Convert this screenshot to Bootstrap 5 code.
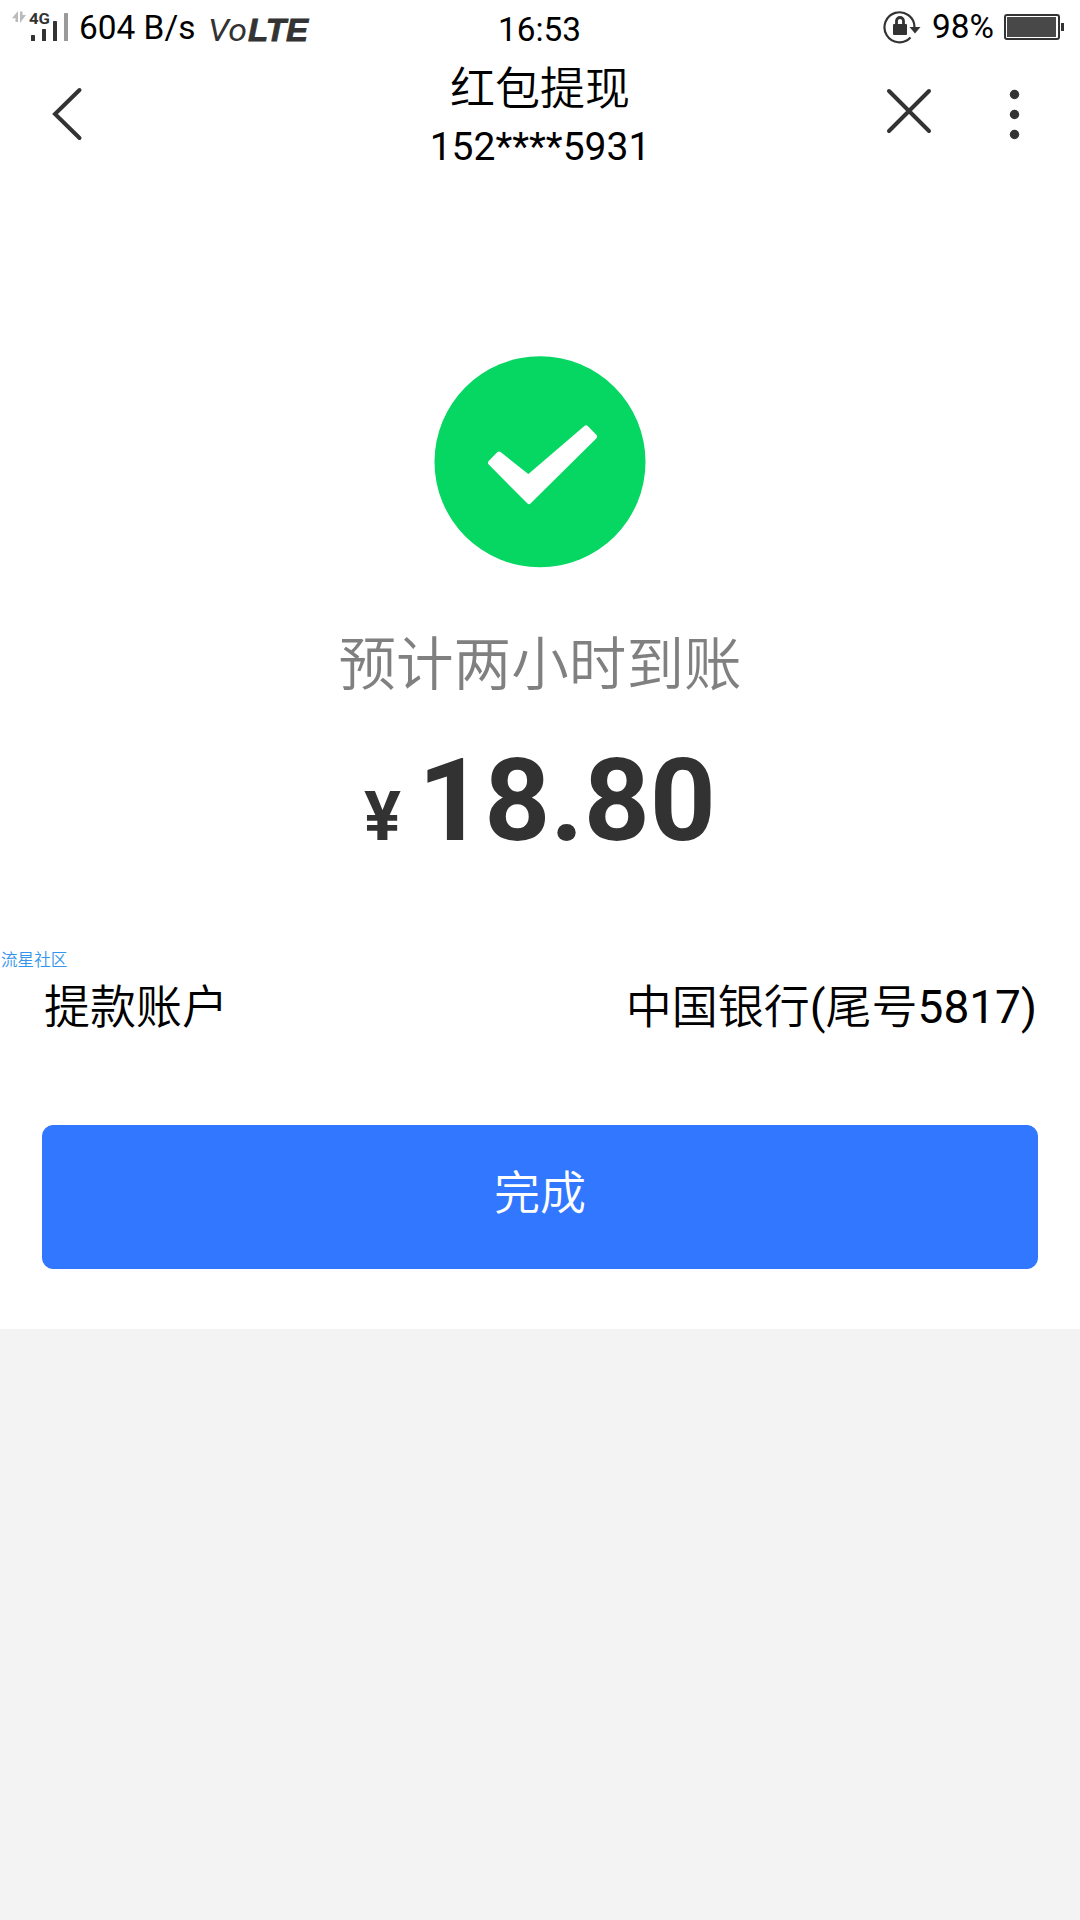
<!DOCTYPE html>
<html lang="zh-CN">
<head>
<meta charset="utf-8">
<meta name="viewport" content="width=device-width, initial-scale=1">
<title>红包提现</title>
<link href="https://cdn.jsdelivr.net/npm/bootstrap@5.3.0/dist/css/bootstrap.min.css" rel="stylesheet">
<style>
body{font-family:Roboto,"Noto Sans CJK SC",sans-serif;background:#f3f3f3;color:#000}
.screen-top{height:1329px;background:#fff}
.status-bar{height:56px;font-size:33.4px;line-height:56px;padding:0 16px 0 11px}
.status-side{width:440px}
.clock-text{padding:2px 0 0 4px}
.battery-text{margin:-1px 9px 0 11px}
.title-bar{height:116px;padding:0 40px}
.title-side{width:260px}
.title-main{font-size:45px;line-height:66px;padding-top:1px;font-weight:350}
.title-sub{font-size:39px;line-height:48px}
.icon-btn{line-height:0}
.result-icon{margin-top:184px}
.result-note{margin-top:58px;font-size:57.6px;line-height:80px;font-weight:350;color:#808080}
.amount{height:120px;margin-top:35px;line-height:120px;color:#323232}
.amount-num{font-size:115.2px}
.amount-cur{font-size:69px;margin-right:17px}
.site-tag{margin-top:87px;height:29px;padding-left:1px;font-size:16.6px;line-height:26px;font-weight:350;color:#3595ee}
.account-row{font-size:46px;line-height:60px;padding:0 43px 0 44px;font-weight:350}
.action-wrap{padding:88px 42px 0}
.btn-done{--bs-btn-bg:#3277ff;--bs-btn-border-color:#3277ff;--bs-btn-color:#fff;--bs-btn-border-radius:11px;--bs-btn-font-size:46px;--bs-btn-font-weight:350;height:144px;line-height:132px;padding:0 0 8px}
</style>
</head>
<body>
<main class="screen-top d-flex flex-column">
  <header>
    <div class="status-bar d-flex justify-content-between">
      <div class="status-side d-flex">
        <svg width="60" height="56" viewBox="11 0 60 56" fill="#333">
          <path fill="#bbb" d="M18 11V22H15.500V18.200H12ZM20 11.500H22.500V15H26L20 23Z"/>
          <text x="29" y="24" font-size="15" font-weight="700" textLength="21" lengthAdjust="spacingAndGlyphs">4G</text>
          <rect x="31" y="35" width="4" height="6" rx=".6"/><rect x="42" y="29" width="4" height="12" rx=".6"/><rect x="53" y="21" width="4" height="20" rx=".6"/>
          <rect x="64" y="13" width="4" height="28" rx=".6" fill="#999"/>
        </svg>
        <span class="ms-2">604 B/s</span>
        <svg class="ms-2" width="110" height="56" viewBox="203 0 110 56" fill="#333" font-style="italic">
          <text x="208" y="40.500" font-size="32" textLength="39" lengthAdjust="spacingAndGlyphs" font-family="Roboto">Vo</text>
          <text x="248" y="40.500" font-size="31.500" font-weight="700" stroke="#333" stroke-width=".8" textLength="60" lengthAdjust="spacingAndGlyphs" font-family="Liberation Sans">LTE</text>
        </svg>
      </div>
      <div class="clock-text">16:53</div>
      <div class="status-side d-flex justify-content-end">
        <svg width="38" height="56" viewBox="883 0 38 56">
          <path d="M910.500 37.500A15 15 0 1 1 914.500 27" fill="none" stroke="#333" stroke-width="2.200"/>
          <path d="M909.500 27H920.500L915 33.500Z" fill="#333"/>
          <rect x="893" y="24" width="14" height="11" rx="1" fill="#333"/>
          <path d="M896.500 25V21a3.500 3.500 0 0 1 7 0V25" fill="none" stroke="#333" stroke-width="2.800"/>
        </svg>
        <span class="battery-text">98%</span>
        <svg width="61" height="56" viewBox="1003 0 61 56">
          <rect x="1005" y="15" width="54" height="24" rx="2" fill="#fff" stroke="#333" stroke-width="2"/>
          <rect x="1007" y="17" width="49" height="20" fill="#484848"/><rect x="1061" y="23" width="3" height="8" fill="#333"/>
        </svg>
      </div>
    </div>
    <nav class="title-bar d-flex justify-content-between">
      <div class="title-side">
        <a href="#" class="icon-btn d-block" aria-label="返回"><svg width="60" height="100" viewBox="40 56 60 100" fill="none" stroke="#333" stroke-width="4" stroke-linecap="round"><path d="M79.500 90L55 114L79.500 138"/></svg></a>
      </div>
      <div class="text-center">
        <div class="title-main">红包提现</div>
        <div class="title-sub">152****5931</div>
      </div>
      <div class="title-side d-flex justify-content-end">
        <a href="#" class="icon-btn" aria-label="关闭"><svg width="100" height="100" viewBox="880 56 100 100" fill="none" stroke="#333" stroke-width="4" stroke-linecap="round"><path d="M889 91L929 131M929 91L889 131"/></svg></a>
        <a href="#" class="icon-btn" aria-label="更多"><svg width="60" height="100" viewBox="980 56 60 100" fill="#333"><circle cx="1014.500" cy="94.500" r="4.700"/><circle cx="1014.500" cy="114.500" r="4.700"/><circle cx="1014.500" cy="134.500" r="4.700"/></svg></a>
      </div>
    </nav>
  </header>
  <section class="text-center">
    <svg class="result-icon d-block mx-auto" width="212" height="212" viewBox="0 0 212 212">
      <circle cx="106" cy="105.800" r="105.500" fill="#06d662"/>
      <path d="M56.500 106.700L65 98L94.300 121.300L152 71.800L160.500 80.600L95 145.500Z" fill="#fff" stroke="#fff" stroke-width="5" stroke-linejoin="round"/>
    </svg>
    <div class="result-note">预计两小时到账</div>
    <div class="amount d-flex justify-content-center align-items-baseline fw-bold"><span class="amount-cur">¥</span><span class="amount-num">18.80</span></div>
  </section>
  <div class="site-tag">流星社区</div>
  <div class="account-row d-flex justify-content-between"><span>提款账户</span><span>中国银行<span class="fw-normal">(</span>尾号<span class="fw-normal">5817)</span></span></div>
  <div class="action-wrap d-grid"><button type="button" class="btn btn-primary btn-done">完成</button></div>
</main>
<script src="https://cdn.jsdelivr.net/npm/bootstrap@5.3.0/dist/js/bootstrap.bundle.min.js"></script>
</body>
</html>
